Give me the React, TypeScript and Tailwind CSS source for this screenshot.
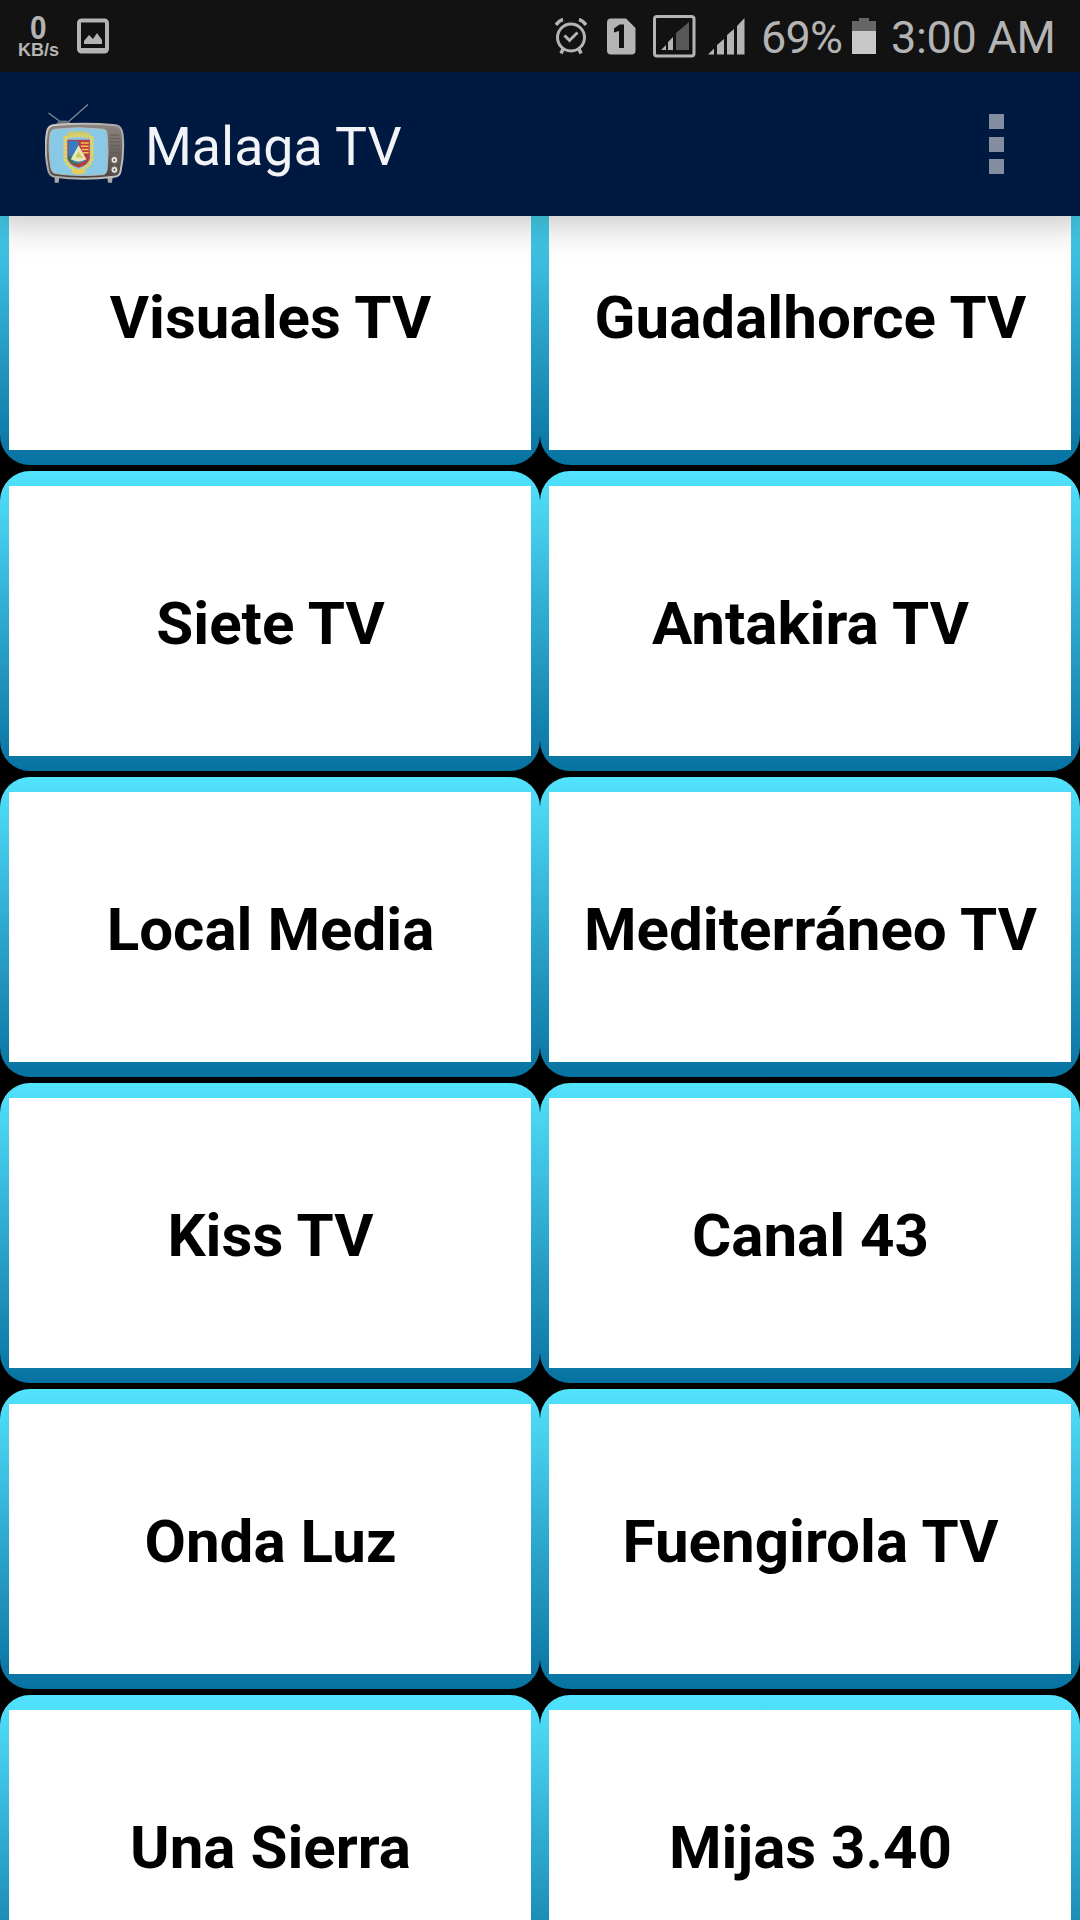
const channels = [
  "Visuales TV",
  "Guadalhorce TV",
  "Siete TV",
  "Antakira TV",
  "Local Media",
  "Mediterráneo TV",
  "Kiss TV",
  "Canal 43",
  "Onda Luz",
  "Fuengirola TV",
  "Una Sierra",
  "Mijas 3.40",
];

function StatusBar() {
  return (
    <div className="flex h-[72px] shrink-0 items-center bg-[#121212] text-[#b4b4b4]">
      <div className="ml-[17px] flex w-[43px] flex-col items-center pt-[1px] font-['Liberation_Sans',sans-serif] font-bold">
        <span className="h-[26px] scale-x-90 text-[33px] leading-[26px]">0</span>
        <span className="h-[18px] text-[18px] leading-[19px]">KB/s</span>
      </div>
      <svg className="ml-[17px]" width="32" height="36" viewBox="0 0 32 36">
        <rect x="2" y="2.5" width="28" height="31" rx="2.5" fill="none" stroke="#b4b4b4" strokeWidth="4" />
        <path d="M3 30h26v4H3zM7 26v-3l5-6 4 4 4-6 5 7v4z" fill="#b4b4b4" />
      </svg>
      <div className="ml-auto flex items-center">
        <svg width="32" height="37" viewBox="0 0 32 37" fill="none" stroke="#b4b4b4">
          <circle cx="16" cy="19.5" r="13.5" strokeWidth="3" />
          <path d="M9.5 17.5l5 5 8-8" strokeWidth="3" />
          <path d="M1 7q3-4.500 7-5.500M31 7q-3-4.500-7-5.500" strokeWidth="3.500" />
          <path d="M8 31l-2 4.500M24 31l2 4.500" strokeWidth="3.500" />
        </svg>
        <svg className="ml-[20px]" width="29" height="37" viewBox="0 0 29 37">
          <path d="M4 .5h15L28.500 10v22.500a4 4 0 0 1-4 4H4a4 4 0 0 1-4-4v-28a4 4 0 0 1 4-4z" fill="#b4b4b4" />
          <path d="M12.500 6.500H17V30h-5V13l-5 1.500v-4z" fill="#121212" />
        </svg>
        <svg className="ml-[17px]" width="43" height="43" viewBox="0 0 43 43">
          <rect x="1.500" y="1.500" width="39.500" height="39.500" rx="2.500" fill="none" stroke="#b4b4b4" strokeWidth="3" />
          <path d="M23 18L36 7v28H23z" fill="#575757" />
          <path d="M8 35l5-5v5zM15 35V27l5-5v13z" fill="#b4b4b4" />
        </svg>
        <svg className="ml-[12px]" width="37" height="37" viewBox="0 0 37 37">
          <path d="M0 36.500l6-6v6zM9 36.500V27l7-6v15.500zM19 36.500V17l7-6v25.500zM29 36.500V8l7.500-8v36.500z" fill="#b4b4b4" />
        </svg>
        <span className="ml-[16px] w-[83px] whitespace-nowrap pt-[3px] font-[Roboto,sans-serif] text-[45px] leading-[69px] tracking-[-0.8px]">
          69%
        </span>
        <svg className="ml-[8px]" width="24" height="36" viewBox="0 0 24 36">
          <path d="M0 3h7V0h10v3h7v11H0z" fill="#666" />
          <path d="M0 13h24v23H0z" fill="#c8c8c8" />
        </svg>
        <span className="ml-[15px] mr-[23px] w-[166px] whitespace-nowrap pt-[3px] font-[Roboto,sans-serif] text-[45px] leading-[69px] tracking-[-0.3px]">
          3:00 AM
        </span>
      </div>
    </div>
  );
}

function TvLogo() {
  return (
    <svg width="84" height="84" viewBox="0 0 84 84">
      <defs>
        <linearGradient id="shell" x1="0" y1="0" x2="0" y2="1">
          <stop offset="0" stopColor="#8d8681" />
          <stop offset="0.5" stopColor="#6e6661" />
          <stop offset="1" stopColor="#4c443e" />
        </linearGradient>
        <linearGradient id="rim" x1="0" y1="0" x2="1" y2="1">
          <stop offset="0" stopColor="#d0cdca" />
          <stop offset="0.5" stopColor="#a9a5a2" />
          <stop offset="1" stopColor="#c9c6c3" />
        </linearGradient>
      </defs>
      <path d="M3.500 11l15 11M43 2.500L22 21" stroke="#7d8798" strokeWidth="1.300" />
      <path d="M11 23q1-4.500 6-4.500h3q5 0 6 4.500z" fill="#687180" />
      <g transform="translate(0 -1.500) scale(.97 .99)">
        <path d="M10 76h5l-1 7h-4zM64 76h6l-1 7h-4z" fill="#aaa" />
        <path d="M8 25Q40 22 73 25Q79 26 80 34Q82 52 78 71Q77 77 71 77Q39 81 10 77Q4 76 3 69Q-1 50 2 32Q3 26 8 25z" fill="url(#shell)" stroke="url(#rim)" strokeWidth="2" />
        <path d="M10 29Q34 26 60 29Q64 29 64 35Q66 52 64 70Q63 75 59 75Q34 77 12 74Q7 74 6 68Q3 50 5 35Q6 29 10 29z" fill="#8ac9e5" stroke="#b4b9bc" strokeWidth="1" />
        <path d="M67 35h10M67 38.500h10M67 42h10M67 45.500h10M67 49h10M67 52.500h10" stroke="#645c57" strokeWidth="1" />
        <circle cx="71.500" cy="60" r="3.500" fill="#e5e1dd" stroke="#6b625c" />
        <circle cx="71.500" cy="70" r="3.500" fill="#e5e1dd" stroke="#6b625c" />
        <circle cx="71.500" cy="60" r="1" fill="#4b4440" />
        <circle cx="71.500" cy="70" r="1" fill="#4b4440" />
      </g>
      <g transform="translate(-4.500 -6.500) scale(1.120 1.080)">
        <path d="M22 39q12-4 24 0v20q-3 8-12 11q-9-3-12-11z" fill="none" stroke="#e6d35b" strokeWidth="3" strokeDasharray="3 .6" />
        <path d="M24 36q10-3 20 0" stroke="#e0c94e" strokeWidth="3" strokeDasharray="2 .7" fill="none" />
        <path d="M24 41h20v17q-1 6-10 9q-9-3-10-9z" fill="#c0393c" />
        <path d="M25 42h9v13l-6 5-3-4z" fill="#357cc0" />
        <path d="M36 44h7M36 47h7M37 50h6M38 53h5" stroke="#efc44c" strokeWidth="1.400" />
        <path d="M25 56v3q2 4 8 6v-8z" fill="#267b50" />
        <path d="M34 46l7 13q-7 5-14 0z" fill="#e6e7b9" />
        <path d="M31 57l3-5 4 6z" fill="#c9c95c" />
        <path d="M28 60q6 4 12 0" stroke="#4386b2" strokeWidth="1.500" fill="none" />
        <path d="M28 70q6 3 12 0" stroke="#e8ce50" strokeWidth="3" fill="none" />
      </g>
    </svg>
  );
}

function AppBar() {
  return (
    <header className="relative z-10 flex h-36 shrink-0 items-center bg-[#001941] shadow-[0_-6px_36px_12px_rgba(0,0,0,0.25)]">
      <div className="ml-[45px]">
        <TvLogo />
      </div>
      <h1 className="ml-[16px] mt-[5px] whitespace-nowrap font-[Roboto,sans-serif] text-[53.7px] leading-[64px] text-[#f1f3f6]">
        Malaga TV
      </h1>
      <div className="ml-auto mr-[76px] flex flex-col gap-[7.5px]">
        <span className="size-[15px] bg-[#858da0]" />
        <span className="size-[15px] bg-[#858da0]" />
        <span className="size-[15px] bg-[#858da0]" />
      </div>
    </header>
  );
}

export default function App() {
  return (
    <div className="flex h-[1920px] w-[1080px] flex-col overflow-hidden bg-black">
      <div className="relative z-20 flex flex-col">
        <StatusBar />
      </div>
      <AppBar />
      <main className="-mt-[51px] grid shrink-0 grid-cols-2 gap-y-[6px]">
        {channels.map((name) => (
          <div
            key={name}
            className="h-[300px] rounded-[30px] bg-linear-to-b from-[#52e3fd] to-[#0672a1] px-[9px] py-[15px]"
          >
            <div className="flex h-full items-center justify-center bg-white pl-[1px] pt-[7px] font-[Roboto,sans-serif] text-[60.1px] font-bold text-black">
              {name}
            </div>
          </div>
        ))}
      </main>
    </div>
  );
}
